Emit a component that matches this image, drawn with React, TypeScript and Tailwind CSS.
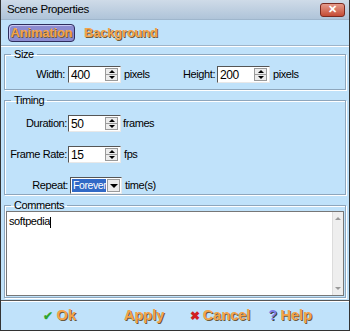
import React from 'react';

const font = { fontFamily: '"Liberation Sans", Arial, sans-serif' };

function Spin() {
    return (
        <div className="flex flex-col w-[13px] h-[13px] border border-[#9a9a9a] bg-[#ececec] mr-[2px]">
            <div className="flex-1 flex items-center justify-center border-b border-[#9a9a9a]">
                <div className="w-0 h-0 border-l-[3px] border-r-[3px] border-b-[3px] border-l-transparent border-r-transparent border-b-black" />
            </div>
            <div className="flex-1 flex items-center justify-center">
                <div className="w-0 h-0 border-l-[3px] border-r-[3px] border-t-[3px] border-l-transparent border-r-transparent border-t-black" />
            </div>
        </div>
    );
}

function NumBox({ value }: { value: string }) {
    return (
        <div className="w-[53px] h-[17px] flex items-center bg-white border-t border-l border-t-[#555] border-l-[#555] border-b border-r border-b-[#e8e8e8] border-r-[#e8e8e8]">
            <span className="flex-1 pl-[2px] text-[12px] leading-none text-black">{value}</span>
            <Spin />
        </div>
    );
}

function Group({ title, className, children }: any) {
    return (
        <fieldset className={`border border-[#8ea6bc] shadow-[inset_1px_1px_0_#fff,1px_1px_0_#fff] ${className}`}>
            <legend className="ml-[6px] px-[3px] text-[11px] leading-[12px] text-black">{title}</legend>
            {children}
        </fieldset>
    );
}

const btnText = 'font-bold text-[13px] tracking-[-0.2px] text-[#f3a34a] [text-shadow:1px_1px_0_#6b5a3a]';
const footText = 'font-bold text-[14.5px] tracking-[0px] text-[#f3a34a] [text-shadow:1px_1px_0_#6b5a3a]';

export default function App() {
    return (
        <div style={font} className="w-[350px] h-[331px] flex flex-col bg-[#c0e2fa] border-x border-b border-[#333] overflow-hidden tracking-[-0.4px]">
            {/* title bar */}
            <div className="h-[20px] flex items-center justify-between bg-gradient-to-b from-[#cfdbe8] to-[#afc4d9] pl-[6px] pr-[4px] border-b border-[#9fb6cc]">
                <span className="text-[11.5px] text-black">Scene Properties</span>
                <div className="w-[25px] h-[14px] rounded-[3px] bg-gradient-to-b from-[#e59a8a] to-[#c44a34] border border-[#7a2a20] flex items-center justify-center">
                    <span className="text-white font-bold text-[11px] leading-none">✕</span>
                </div>
            </div>

            {/* tabs */}
            <div className="h-[26px] flex items-center gap-[9px] pl-[7px] border-b border-[#9db4c9] shadow-[0_1px_0_#fff]">
                <div className="w-[67px] h-[18px] rounded-[4px] bg-[#8c8bd0] border border-[#2e2d5c] shadow-[inset_1px_1px_0_#c9c8f2] flex items-center justify-center">
                    <span className={btnText}>Animation</span>
                </div>
                <span className={btnText}>Background</span>
            </div>

            <div className="flex-1 flex flex-col px-[3px] pt-[2px] gap-[4px]">
                <Group title="Size" className="h-[42px]">
                    <div className="flex items-center text-[11px] text-black pt-[6px]">
                        <span className="w-[63px] text-right pr-[3px]">Width:</span>
                        <NumBox value="400" />
                        <span className="ml-[3px] w-[59px]">pixels</span>
                        <span className="w-[34px]">Height:</span>
                        <NumBox value="200" />
                        <span className="ml-[3px]">pixels</span>
                    </div>
                </Group>

                <Group title="Timing" className="h-[101px]">
                    <div className="flex flex-col text-[11px] text-black pt-[9px] gap-[14px]">
                        <div className="flex items-center">
                            <span className="w-[63px] text-right pr-[1px]">Duration:</span>
                            <NumBox value="50" />
                            <span className="ml-[2px]">frames</span>
                        </div>
                        <div className="flex items-center">
                            <span className="w-[63px] text-right pr-[1px]">Frame Rate:</span>
                            <NumBox value="15" />
                            <span className="ml-[3px]">fps</span>
                        </div>
                        <div className="flex items-center">
                            <span className="w-[65px] text-right pr-[2px]">Repeat:</span>
                            <div className="w-[52px] h-[17px] flex items-center bg-white border-t border-l border-t-[#555] border-l-[#555] border-b border-r border-b-[#e8e8e8] border-r-[#e8e8e8]">
                                <span className="ml-[1px] bg-[#3169c6] text-white text-[10.5px] tracking-[-0.4px] leading-[13px] pl-[1px]">Forever</span>
                                <div className="ml-auto w-[13px] h-[13px] mr-[1px] bg-[#ececec] border border-[#9a9a9a] flex items-center justify-center">
                                    <div className="w-0 h-0 border-l-[4px] border-r-[4px] border-t-[4px] border-l-transparent border-r-transparent border-t-black" />
                                </div>
                            </div>
                            <span className="ml-[3px]">time(s)</span>
                        </div>
                    </div>
                </Group>

                <Group title="Comments" className="flex-1 flex">
                    <div className="flex-1 mx-[1px] mb-[1px] flex bg-white border border-[#777]">
                        <div className="flex-1 px-[2px] pt-[1px] text-[11px] text-black">softpedia<span className="inline-block w-px h-[11px] bg-black align-middle" /></div>
                        <div className="w-[11px] bg-[#eeeeee] border-l border-[#dcdcdc] flex flex-col justify-between items-center py-[5px]">
                            <div className="w-0 h-0 border-l-[3px] border-r-[3px] border-b-[3px] border-l-transparent border-r-transparent border-b-[#999]" />
                            <div className="w-0 h-0 border-l-[3px] border-r-[3px] border-t-[3px] border-l-transparent border-r-transparent border-t-[#999]" />
                        </div>
                    </div>
                </Group>
            </div>

            {/* bottom buttons */}
            <div className="h-[30px] mt-[2px] border-t border-[#555] shadow-[inset_0_1px_0_#fff] flex items-center">
                <div className="ml-[42px] flex items-center gap-[4px]">
                    <span className="text-[#2fa52f] font-bold text-[12px]">✔</span>
                    <span className={footText}>Ok</span>
                </div>
                <span className={`ml-[48px] ${footText}`}>Apply</span>
                <div className="ml-[26px] flex items-center gap-[3px]">
                    <span className="text-[#d12020] font-bold text-[12px]">✖</span>
                    <span className={footText}>Cancel</span>
                </div>
                <div className="ml-[18px] flex items-center gap-[4px]">
                    <span className="text-[#7d7de8] font-bold text-[14px] [text-shadow:1px_1px_0_#444]">?</span>
                    <span className={footText}>Help</span>
                </div>
            </div>
        </div>
    );
}
